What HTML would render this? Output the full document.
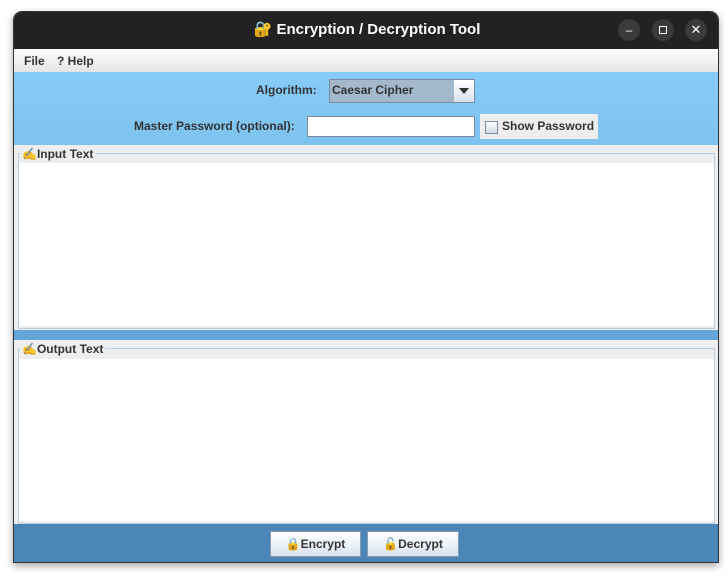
<!DOCTYPE html><html><head><style>
body{margin:0;width:728px;height:579px;background:#fff;position:relative;font-family:"Liberation Sans","Noto Sans CJK SC",sans-serif;overflow:hidden}
.a{position:absolute}
.win{left:13px;top:11px;width:706px;height:552px;border-radius:9px 9px 0 0;overflow:hidden;box-shadow:0 3px 8px rgba(0,0,0,.35);border:1px solid #333;box-sizing:border-box}
.t{font-weight:bold;font-size:12px;color:#333}
.btn{background:linear-gradient(#fff,#d8e4f0);border:1px solid #8a9aab;box-sizing:border-box;font-size:12px;font-weight:bold;color:#333;text-align:center;line-height:24px}
</style></head><body>
<div class="a win">
<div class="a" style="left:0;top:0;width:706px;height:37px;background:#222"></div>
<div class="a" style="left:0;top:8px;width:706px;text-align:center;color:#fff;font-weight:bold;font-size:15px">🔐 Encryption / Decryption Tool</div>
<div class="a" style="left:604px;top:7px;width:22px;height:22px;border-radius:11px;background:#3a3a3a;color:#fff;text-align:center;font-size:12px;line-height:22px">–</div>
<div class="a" style="left:638px;top:7px;width:22px;height:22px;border-radius:11px;background:#3a3a3a"><div class="a" style="left:7px;top:7px;width:6px;height:6px;border:1.5px solid #fff"></div></div>
<div class="a" style="left:671px;top:7px;width:22px;height:22px;border-radius:11px;background:#3a3a3a;color:#fff;text-align:center;font-size:13px;line-height:22px">✕</div>
<div class="a" style="left:0;top:37px;width:706px;height:23px;background:linear-gradient(#fff,#e4e4e4);border-bottom:1px solid #ccc"></div>
<div class="a t" style="left:10px;top:42px">File</div>
<div class="a t" style="left:43px;top:42px">? Help</div>
<div class="a" style="left:0;top:60px;width:706px;height:73px;background:linear-gradient(#87ccf8,#7ec2f0)"></div>
<div class="a t" style="left:242px;top:71px">Algorithm:</div>
<div class="a" style="left:315px;top:67px;width:146px;height:24px;background:#a4b8cc;border:1px solid #7c8a99;box-sizing:border-box"></div>
<div class="a t" style="left:318px;top:71px">Caesar Cipher</div>
<div class="a" style="left:440px;top:68px;width:20px;height:22px;background:linear-gradient(#fff,#d8e2ee)"><div class="a" style="left:5px;top:8px;border-left:5px solid transparent;border-right:5px solid transparent;border-top:6px solid #333"></div></div>
<div class="a t" style="left:120px;top:107px">Master Password (optional):</div>
<div class="a" style="left:293px;top:104px;width:168px;height:21px;background:#fff;border:1px solid #7c8a99;box-sizing:border-box"></div>
<div class="a" style="left:466px;top:102px;width:118px;height:25px;background:#eee"></div>
<div class="a" style="left:471px;top:109px;width:11px;height:11px;border:1px solid #7c8a99;background:linear-gradient(#fff,#d0dae6)"></div>
<div class="a t" style="left:488px;top:107px">Show Password</div>
<div class="a" style="left:0;top:133px;width:706px;height:185px;background:#eee"></div>
<div class="a" style="left:4px;top:141px;width:697px;height:176px;border:1px solid #b8cfe4;box-sizing:border-box"></div>
<div class="a" style="left:5px;top:151px;width:695px;height:163px;background:#fff"></div>
<div class="a t" style="left:6px;top:135px;background:#eee;padding:0 2px">✍Input Text</div>
<div class="a" style="left:0;top:318px;width:706px;height:10px;background:#64a6d6"></div>
<div class="a" style="left:0;top:328px;width:706px;height:184px;background:#eee"></div>
<div class="a" style="left:4px;top:336px;width:697px;height:176px;border:1px solid #b8cfe4;box-sizing:border-box"></div>
<div class="a" style="left:5px;top:347px;width:695px;height:162px;background:#fff"></div>
<div class="a t" style="left:6px;top:330px;background:#eee;padding:0 2px">✍Output Text</div>
<div class="a" style="left:0;top:512px;width:706px;height:40px;background:#4a86b8"></div>
<div class="a btn" style="left:256px;top:519px;width:91px;height:26px">🔒Encrypt</div>
<div class="a btn" style="left:353px;top:519px;width:92px;height:26px">🔓Decrypt</div>
</div>
</body></html>
